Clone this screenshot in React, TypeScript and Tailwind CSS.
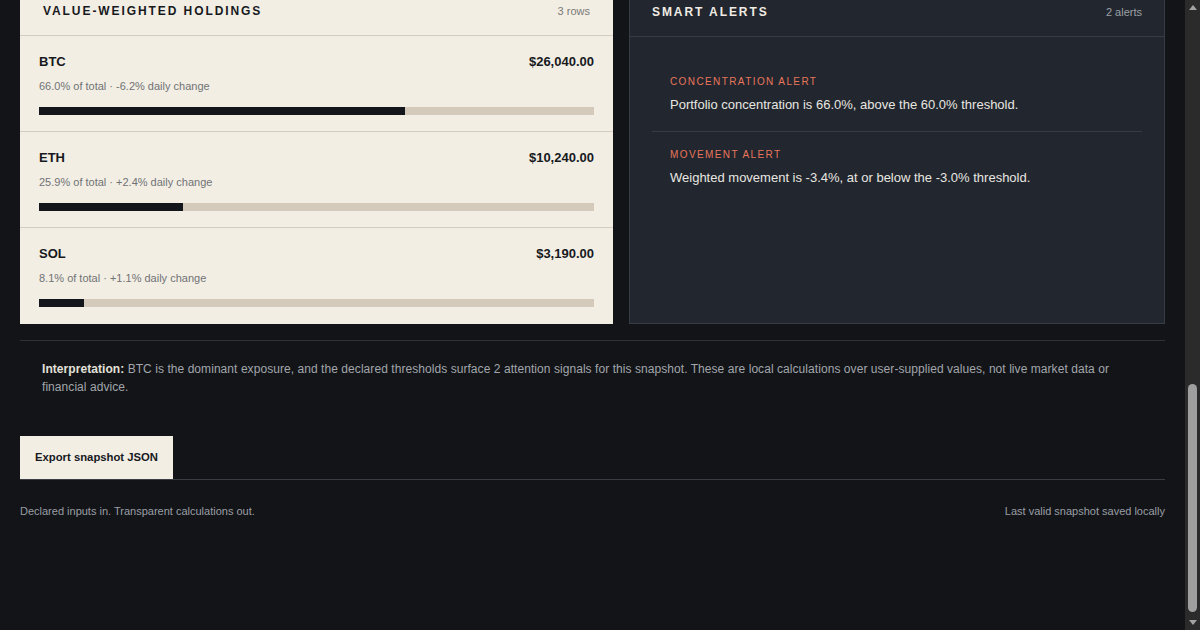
import { useLayoutEffect, useRef, useState } from 'react';

type Holding = {
  symbol: string;
  quantity: string;
  price: string;
  value: number;
  change: number;
};

const holdings: Holding[] = [
  { symbol: 'BTC', quantity: '0.4000', price: '65,100.00', value: 26040, change: -6.2 },
  { symbol: 'ETH', quantity: '3.2000', price: '3,200.00', value: 10240, change: 2.4 },
  { symbol: 'SOL', quantity: '22.0000', price: '145.00', value: 3190, change: 1.1 },
];

const total = holdings.reduce((s, h) => s + h.value, 0);
const movement = holdings.reduce((s, h) => s + (h.value / total) * h.change, 0);

const money = (n: number) =>
  '$' + n.toLocaleString('en-US', { minimumFractionDigits: 2, maximumFractionDigits: 2 });
const signed = (n: number) => `${n > 0 ? '+' : ''}${n.toFixed(1)}%`;

const alerts = [
  {
    label: 'Concentration alert',
    text: 'Portfolio concentration is 66.0%, above the 60.0% threshold.',
  },
  {
    label: 'Movement alert',
    text: `Weighted movement is ${movement.toFixed(1)}%, at or below the -3.0% threshold.`,
  },
];

const steps = [
  {
    n: '01',
    title: 'Declare',
    body: 'List each asset with a quantity, a price and the daily change you want to test. Nothing is fetched; the numbers are yours.',
  },
  {
    n: '02',
    title: 'Weight',
    body: 'Each position is valued as quantity × price, then weighted by its share of the total so large holdings count for more.',
  },
  {
    n: '03',
    title: 'Flag',
    body: 'Concentration and movement are compared with the thresholds you set, and any breach is listed as a plain-language alert.',
  },
];

const heading = 'text-[12px] font-semibold uppercase tracking-[0.16em] leading-4';
const field =
  'h-9 w-full border border-[#383d45] bg-[#181b20] px-3 text-[13px] leading-9 text-[#ece8df]';

function Metric({ label, value, note }: { label: string; value: string; note: string }) {
  return (
    <div className="border border-[#383d45] bg-[#1b1e24] px-[22px] py-5">
      <div className="text-[10px] uppercase tracking-[0.14em] text-[#9ca0a6]">{label}</div>
      <div className="mt-2 text-[24px] font-semibold leading-8 text-[#f2eee4]">{value}</div>
      <div className="mt-1 text-[11px] text-[#8a8f96]">{note}</div>
    </div>
  );
}

// dark-scheme scrollbar, drawn so it shows in the headless capture
function ScrollRail({ top, height }: { top: number; height: number }) {
  return (
    <div className="flex h-screen w-[15px] shrink-0 flex-col bg-[#2b2b2b]">
      <div className="flex h-[15px] items-center justify-center">
        <svg width="8" height="5" viewBox="0 0 8 5">
          <path d="M4 0 L8 5 L0 5 Z" fill="#a3a3a3" />
        </svg>
      </div>
      <div className="relative flex-1">
        <div
          className="absolute left-[3px] w-[9px] rounded-full bg-[#9f9f9f]"
          style={{ top, height }}
        />
      </div>
      <div className="flex h-[15px] items-center justify-center">
        <svg width="8" height="5" viewBox="0 0 8 5">
          <path d="M0 0 L8 0 L4 5 Z" fill="#a3a3a3" />
        </svg>
      </div>
    </div>
  );
}

export default function App() {
  const scroller = useRef<HTMLDivElement>(null);
  const [thumb, setThumb] = useState({ top: 0, height: 600 });

  useLayoutEffect(() => {
    const el = scroller.current;
    if (!el) return;
    el.scrollTop = el.scrollHeight;
    const track = el.clientHeight - 30;
    setThumb({
      top: (el.scrollTop / el.scrollHeight) * track,
      height: (el.clientHeight / el.scrollHeight) * track - 3,
    });
  }, []);

  return (
    <div className="flex h-screen bg-[#121418] font-['Liberation_Sans',Arial,sans-serif]">
      <div ref={scroller} className="h-screen flex-1 overflow-y-auto scheme-dark">
        <div className="px-5 pt-24 pb-[111px]">
          {/* Intro */}
          <header className="px-[22px]">
            <div className="text-[11px] uppercase tracking-[0.18em] text-[#e8765c]">
              Portfolio signal desk
            </div>
            <h1 className="mt-4 text-[38px] font-semibold leading-[46px] text-[#f2eee4]">
              Value-weighted exposure, declared and explained.
            </h1>
            <p className="mt-4 max-w-[640px] text-[14px] leading-6 text-[#9ca0a6]">
              Enter what you hold and what each position did today. Every figure below is computed in
              this browser from your inputs, with the formula shown next to the result.
            </p>
          </header>

          {/* Method */}
          <section className="mt-14 grid grid-cols-3 gap-4">
            {steps.map((s) => (
              <div key={s.n} className="border-t border-[#383d45] px-[22px] pt-6 pb-8">
                <div className="text-[10px] tracking-[0.14em] text-[#e8765c]">{s.n}</div>
                <div className="mt-2 text-[16px] font-semibold leading-6 text-[#f2eee4]">{s.title}</div>
                <p className="mt-2 text-[12px] leading-5 text-[#9ca0a6]">{s.body}</p>
              </div>
            ))}
          </section>

          {/* Inputs */}
          <section className="mt-12 grid grid-cols-[593px_1fr] gap-4">
            <div className="border border-[#383d45] bg-[#1b1e24]">
              <div className="flex items-center justify-between border-b border-[#383d45] px-[22px] py-4">
                <span className={`${heading} text-[#f2eee4]`}>Declared holdings</span>
                <span className="text-[11px] text-[#9ca0a6]">editable</span>
              </div>
              <div className="grid grid-cols-4 gap-3 px-[22px] pt-4 text-[10px] uppercase tracking-[0.14em] text-[#8a8f96]">
                <span>Asset</span>
                <span>Quantity</span>
                <span>Price (USD)</span>
                <span>Daily change</span>
              </div>
              {holdings.map((h) => (
                <div key={h.symbol} className="grid grid-cols-4 gap-3 px-[22px] py-3">
                  <div className={field}>{h.symbol}</div>
                  <div className={field}>{h.quantity}</div>
                  <div className={field}>{h.price}</div>
                  <div className={field}>{signed(h.change)}</div>
                </div>
              ))}
              <div className="flex items-center justify-between border-t border-[#383d45] px-[22px] py-4">
                <span className="border border-[#383d45] px-4 py-2 text-[11px] font-semibold text-[#ece8df]">
                  + Add holding
                </span>
                <span className="text-[11px] text-[#8a8f96]">3 of 12 rows used</span>
              </div>
            </div>

            <div className="border border-[#383d45] bg-[#1b1e24]">
              <div className="flex items-center justify-between border-b border-[#383d45] px-[22px] py-4">
                <span className={`${heading} text-[#f2eee4]`}>Alert thresholds</span>
                <span className="text-[11px] text-[#9ca0a6]">2 rules</span>
              </div>
              <div className="flex flex-col gap-5 px-[22px] py-6">
                <label className="block">
                  <span className="text-[10px] uppercase tracking-[0.14em] text-[#8a8f96]">
                    Concentration threshold
                  </span>
                  <div className={`${field} mt-2`}>60.0%</div>
                  <span className="mt-2 block text-[11px] text-[#8a8f96]">
                    Alert when one asset exceeds this share of total value.
                  </span>
                </label>
                <label className="block">
                  <span className="text-[10px] uppercase tracking-[0.14em] text-[#8a8f96]">
                    Movement threshold
                  </span>
                  <div className={`${field} mt-2`}>-3.0%</div>
                  <span className="mt-2 block text-[11px] text-[#8a8f96]">
                    Alert when value-weighted daily change is at or below this figure.
                  </span>
                </label>
              </div>
            </div>
          </section>

          {/* Summary */}
          <section className="mt-4 grid grid-cols-4 gap-4">
            <Metric label="Total value" value={money(total)} note="Sum of quantity × price" />
            <Metric label="Largest position" value="BTC 66.0%" note="Share of total value" />
            <Metric label="Weighted movement" value={signed(movement)} note="Σ weight × daily change" />
            <Metric label="Active alerts" value="2" note="Against declared thresholds" />
          </section>

          {/* Holdings + alerts */}
          <section className="mt-4 grid grid-cols-[593px_1fr] gap-4">
            <div className="bg-[#f2eee4]">
              <div className="flex items-center justify-between border-b border-[#d3ccbf] px-[23px] pt-4 pb-[15px]">
                <span className={`${heading} text-[#17191d]`}>Value-weighted holdings</span>
                <span className="text-[11px] text-[#7a7a78]">3 rows</span>
              </div>
              {holdings.map((h, i) => {
                const share = (h.value / total) * 100;
                const last = i === holdings.length - 1;
                return (
                  <div
                    key={h.symbol}
                    className={`px-[19px] pt-[18px] ${last ? 'pb-[17px]' : 'border-b border-[#d3ccbf] pb-4'}`}
                  >
                    <div className="flex items-center justify-between text-[13px] leading-4 text-[#17191d]">
                      <span className="font-semibold">{h.symbol}</span>
                      <span className="font-bold">{money(h.value)}</span>
                    </div>
                    <div className="mt-2 text-[11px] leading-4 text-[#717275]">
                      {share.toFixed(1)}% of total · {signed(h.change)} daily change
                    </div>
                    <div className="mt-[13px] h-2 bg-[#d3cabb]">
                      <div className="h-2 bg-[#13161b]" style={{ width: `${share}%` }} />
                    </div>
                  </div>
                );
              })}
            </div>

            <div className="border border-[#383d45] bg-[#22262e]">
              <div className="flex items-center justify-between border-b border-[#383d45] px-[22px] pt-4 pb-[15px]">
                <span className={`${heading} text-[#f0ece4]`}>Smart alerts</span>
                <span className="text-[11px] text-[#9ca0a6]">2 alerts</span>
              </div>
              <div className="px-[22px] pt-[22px]">
                {alerts.map((a, i) => (
                  <div
                    key={a.label}
                    className={`px-[18px] py-4 ${i < alerts.length - 1 ? 'border-b border-[#383d45]' : ''}`}
                  >
                    <div className="text-[10px] uppercase leading-[14px] tracking-[0.14em] text-[#e8765c]">
                      {a.label}
                    </div>
                    <div className="mt-[6px] text-[13px] leading-5 text-[#e8e6e1]">{a.text}</div>
                  </div>
                ))}
              </div>
            </div>
          </section>

          {/* Interpretation */}
          <section className="mt-4 border-t border-[#2c3136] px-[22px] pt-[19px]">
            <p className="text-[12px] leading-[18px] tracking-[0.005em] text-[#a2a6ab]">
              <strong className="font-bold text-[#e4e1da]">Interpretation:</strong> BTC is the dominant
              exposure, and the declared thresholds surface 2 attention signals for this snapshot. These
              are local calculations over user-supplied values, not live market data or financial advice.
            </p>
          </section>

          {/* Actions */}
          <div className="mt-10 flex border-b border-[#3a3e44]">
            <button className="h-[43px] bg-[#f2eee4] px-[15px] text-[11.3px] font-semibold text-[#17191d]">
              Export snapshot JSON
            </button>
          </div>

          <footer className="mt-[23px] flex items-center justify-between text-[11px] leading-4 text-[#9a9ea4]">
            <span>Declared inputs in. Transparent calculations out.</span>
            <span>Last valid snapshot saved locally</span>
          </footer>
        </div>
      </div>
      <ScrollRail top={thumb.top} height={thumb.height} />
    </div>
  );
}
